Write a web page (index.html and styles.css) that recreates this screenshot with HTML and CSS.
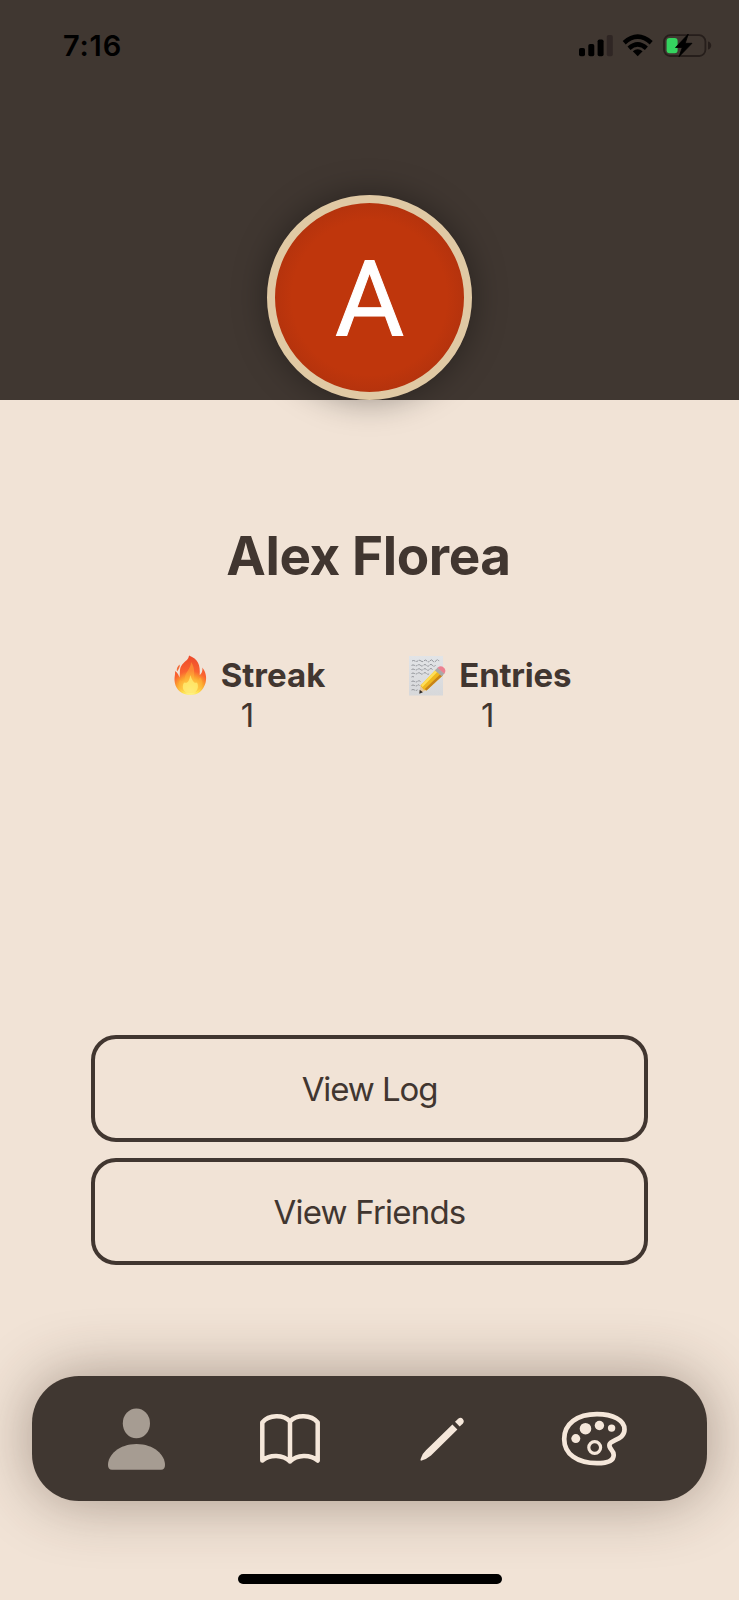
FILE: index.html
```
<!DOCTYPE html>
<html lang="en">
<head>
<meta charset="utf-8">
<title>Profile</title>
<link rel="stylesheet" href="styles.css">
</head>
<body>
<div class="screen">
  <header class="header">
    <div class="status-bar">
      <span class="time">7:16</span>
      <svg class="status-icons" viewBox="578 30 136 30" width="136" height="30">
        <g fill="#000">
          <rect x="579" y="48" width="6" height="8.2" rx="1.8"/>
          <rect x="588.3" y="44" width="6" height="12.2" rx="1.8"/>
          <rect x="597.6" y="39.5" width="6" height="16.7" rx="1.8"/>
          <rect x="606.8" y="35" width="6" height="21.2" rx="1.8" fill="#2f2624"/>
          <path d="M637.7 56.2L632.8 51.3Q637.7 47.3 642.6 51.3Z"/>
        </g>
        <g fill="none" stroke="#000" stroke-width="4.5">
          <path d="M624.2 42.7Q637.7 30.7 651.2 42.7"/>
          <path d="M629 48.2Q637.7 40.500 646.4 48.2"/>
        </g>
        <rect x="664" y="35.2" width="41.4" height="20.8" rx="6.2" fill="none" stroke="#261e1b" stroke-width="1.8"/>
        <path d="M708 41.5Q711.2 42.5 711.2 45.4T708 49.5Z" fill="#261e1b"/>
        <rect x="666.6" y="38" width="11" height="15.2" rx="3" fill="#34d45f"/>
        <path d="M688.300 34L675.500 47.500H682.300L679 56.700L692 43.300H685.200Z" fill="#000" stroke="#000" stroke-width=".8" stroke-linejoin="round"/>
      </svg>
    </div>
    <div class="avatar"><span>A</span></div>
  </header>

  <main class="profile">
    <h1 class="name">Alex Florea</h1>
    <section class="stats">
      <div class="stat">
        <div class="stat-label">
          <svg class="fire" viewBox="174 654 34 42" width="34" height="42">
            <defs>
              <radialGradient id="flame" gradientUnits="userSpaceOnUse" cx="190.5" cy="691" r="35">
                <stop offset="0" stop-color="#fffab0"/><stop offset=".2" stop-color="#fee651"/><stop offset=".4" stop-color="#fca52f"/><stop offset=".58" stop-color="#fa6330"/><stop offset="1" stop-color="#ec4a2b"/>
              </radialGradient>
            </defs>
            <path fill="url(#flame)" d="M189 655.5C198 659 200.5 665 199.7 675C202.5 673 202.8 669 202.2 667.5C206 672 207 678 205.500 683C203 691 198 695 190.500 695C182 695 176 690 174.800 682.500C174 677 175.500 674.500 175 671C178 673 178.800 675.500 179.500 677.500C180.500 673 178.700 669 182.200 664.500C185.500 660.500 188.500 660 189 655.500Z"/>
            <path fill="#f36a37" d="M179.800 664.500C180 667 178.500 669.700 177 671.500C176.300 668.500 177.300 666.500 179.800 664.500Z"/>
            <path fill="#ffb339" opacity=".5" d="M191 662C196 669 193.500 676 194.500 680C196.500 682.500 199 680 200 677C203 681 203 684 200.500 688C196 695 184.500 695 180 688C178 684.500 178.200 682 180.200 680C182 682 184.500 681.500 184.800 678C185 672 191 669 191 662Z"/>
            <path fill="#fff279" opacity=".7" d="M190.300 675C192 680 194 684 197 682.500C199.500 687 197 693.700 190.500 694C184 693.700 181 688 184 682.500C188 684 189.500 680 190.300 675Z"/>
          </svg>
          <span class="streak-text">Streak</span>
        </div>
        <div class="stat-value">1</div>
      </div>
      <div class="stat">
        <div class="stat-label">
          <svg class="memo" viewBox="410 654 38 42" width="38" height="42">
            <defs>
              <linearGradient id="paper" x2="0" y2="1"><stop stop-color="#e2e4e7"/><stop offset="1" stop-color="#d7d8da"/></linearGradient>
            </defs>
            <rect x="411" y="656" width="34" height="39.5" fill="url(#paper)"/>
            <g fill="none" stroke="#7b7d83" stroke-width=".75" stroke-dasharray="3.5 .8 2 .6 5 1">
              <path d="M414 661q1.5-1 3 0t3-.2 3 .2 3-.2 3 .2 3-.2 3 .2 3-.2 3 .3"/>
              <path d="M413.500 665.400q1.500-1 3 0t3-.2 3 .2 3-.2 3 .2 3-.2 3 .2 3-.2"/>
              <path d="M413.500 669.500q1.500-1 3 0t3-.2 3 .2 3-.2 3 .2 3-.2 3 .2"/>
              <path d="M413.500 673.500q1.500-1 3 0t3-.2 3 .2 3-.2 3 .2 3-.2"/>
              <path d="M413.500 677q1.500-1 2.500 0"/>
              <path d="M413.500 681.500q1.500-1 3 0t3-.2 3 .2"/>
              <path d="M413.500 685.500q1.500-1 3 0t3-.2 2 .2"/>
              <path d="M413.500 690q1.500-1 3 0t3-.2"/>
            </g>
            <path d="M421.500 693.500L422.500 685L425 683L429.500 688.300L427.500 690.500Z" fill="#e5c79d"/>
            <path d="M422.500 685.500L438 669.500L444.700 675.500L428.500 690.500L425.500 689.500Z" fill="#efb71e"/>
            <path d="M423 685L438 669.500L440 671.300L424.500 687Z" fill="#ffdf58"/>
            <path d="M428.500 690.500L444.700 675.500L442.800 673.700L426.800 689Z" fill="#c78319"/>
            <path d="M437 670.500L439.800 667.500L446.500 673.500L443.800 676.300Z" fill="#aaa9a9"/>
            <path d="M439.500 667.800Q443.500 664.500 446.600 668.600Q448.300 671.300 446.300 673.700Z" fill="#ec8191"/>
            <path d="M421.300 693.800L421.700 689.800L424.900 692.200Z" fill="#302c2a"/>
          </svg>
          <span class="entries-text">Entries</span>
        </div>
        <div class="stat-value">1</div>
      </div>
    </section>
    <section class="actions">
      <button class="action"><span class="log-text">View Log</span></button>
      <button class="action"><span class="friends-text">View Friends</span></button>
    </section>
  </main>

  <nav class="tab-bar">
    <svg class="person" viewBox="107 1408 60 62" width="60" height="62" fill="#a69c92">
      <ellipse cx="136.400" cy="1423.400" rx="13.600" ry="14.900"/>
      <path d="M112 1469.700Q108 1469.700 108 1465C108 1455 119 1444 136.500 1444S165 1455 165 1465Q165 1469.700 161 1469.700Z"/>
    </svg>
    <svg class="book" viewBox="259 1412 62 54" width="62" height="54" fill="none" stroke="#f5e7da" stroke-width="4.500" stroke-linejoin="round" stroke-linecap="round">
      <path d="M290 1421.500C283.500 1414.400 269 1414.400 262.300 1422.500V1460.500C270 1454 283 1454.500 290 1461.500C297 1454.500 310 1454 317.700 1460.500V1422.500C311 1414.400 296.500 1414.400 290 1421.500ZV1461.500"/>
    </svg>
    <svg class="pencil" viewBox="419 1416 46 46" width="46" height="46" fill="#f5e7da">
      <path d="M452.400 1424.400L457.400 1429.400L431 1455.500Q427 1459 421 1460.700Q420 1460.500 420.800 1458.500Q422.500 1453.200 426 1450.200Z"/>
      <path d="M455 1421.700L458.200 1418.700Q460.800 1416.700 462.800 1418.900Q464.800 1421.200 462.700 1423.700L459.700 1426.500Z"/>
    </svg>
    <svg class="palette" viewBox="561 1411 67 56" width="67" height="56">
      <path fill="none" stroke="#f5e7da" stroke-width="4.700" d="M597 1414.200C577 1414.200 564.200 1424 564.200 1439C564.200 1454 577 1463.200 597 1463.200C607 1463.200 613.700 1460.500 613.700 1455C613.700 1449.500 608.500 1449 609.500 1444.500C611 1439.500 624.500 1440 624.500 1429.500C624.500 1420 613 1414.200 597 1414.200Z"/>
      <g fill="#f5e7da"><circle cx="575.800" cy="1438.600" r="4.500"/><circle cx="585.500" cy="1428.700" r="5.800"/><circle cx="599.400" cy="1425.500" r="4.700"/><circle cx="611.600" cy="1428.100" r="3.700"/></g>
      <circle cx="594.700" cy="1447.500" r="5.900" fill="none" stroke="#f5e7da" stroke-width="3.200"/>
    </svg>
  </nav>
  <div class="home-indicator"></div>
</div>
</body>
</html>
```
FILE: styles.css
```
* { box-sizing: border-box; }
body { margin: 0; background: #f1e3d6; font-family: Inter, sans-serif; color: #413630; }
.screen { width: 739px; height: 1600px; display: flex; flex-direction: column; align-items: center; overflow: hidden; }
.header { width: 100%; height: 400px; flex: none; background: #403731; display: flex; flex-direction: column; align-items: center; }
.status-bar { width: 100%; height: 194.5px; flex: none; padding: 30px 25px 0 63px; display: flex; justify-content: space-between; align-items: flex-start; }
.time { font-size: 29px; line-height: 31px; font-weight: 600; color: #000; letter-spacing: .8px; }
.status-icons { display: block; }
.avatar { width: 205px; height: 205px; flex: none; border-radius: 50%; border: 8px solid #e0c9a4; background: radial-gradient(circle, #bf360c 58%, #b5330d 71%); box-shadow: 0 0 34px rgba(0,0,0,.38); display: flex; align-items: center; justify-content: center; color: #fff; font: 106px/1 Roboto, sans-serif; }
.avatar span { -webkit-text-stroke: 1px #fff; padding-top: 5px; }
.profile { display: flex; flex-direction: column; align-items: center; width: 100%; height: 976px; flex: none; }
.name { margin: 124px 2px 0 0; font-size: 53px; line-height: 64px; font-weight: 700; letter-spacing: -.4px; white-space: nowrap; }
.stats { display: flex; gap: 83px; margin: 66px 0 0 6px; }
.stat { display: flex; flex-direction: column; align-items: center; }
.stat-label { height: 42px; display: flex; align-items: center; gap: 13px; font-size: 33px; font-weight: 700; line-height: 42px; }
.entries-text { letter-spacing: -.2px; }
.stat-value { font-size: 33px; line-height: 38px; margin: 0 4px 2px 0; }
.actions { margin-top: 299px; display: flex; flex-direction: column; gap: 16px; }
.action { width: 557px; height: 107px; border: 4px solid #413630; border-radius: 25px; background: transparent; font: 33px/40px Inter, sans-serif; color: #413630; padding: 0; }
.log-text { letter-spacing: -1.1px; }
.friends-text { letter-spacing: -.8px; }
.tab-bar { width: 675px; height: 125px; flex: none; border-radius: 47px; background: #403731; box-shadow: 0 0 62px rgba(60,40,28,.42); display: flex; align-items: center; padding-left: 75px; }
.book { margin-left: 92px; }
.pencil { margin-left: 98px; }
.palette { margin-left: 96px; }
.home-indicator { width: 264px; height: 10px; flex: none; border-radius: 5px; background: #000; margin-top: 73px; }
```
